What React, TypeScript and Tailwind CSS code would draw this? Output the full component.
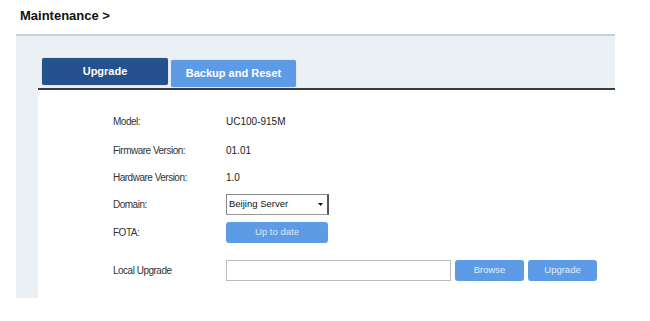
import React from "react";

const font = { fontFamily: '"Liberation Sans", Arial, sans-serif' };

function Row({ label, children, className }: { label: string; children: React.ReactNode; className?: string }) {
  return (
    <div className={"flex h-[21px] items-center " + (className ?? "")}>
      <div className="w-[113px] shrink-0 text-[10px] tracking-[-0.5px] text-[#333]">{label}</div>
      <div className="flex items-center">{children}</div>
    </div>
  );
}

export default function App() {
  return (
    <div className="w-[650px] h-[321px] bg-white overflow-hidden" style={font}>
      <div className="pt-[8px] pl-[20px] text-[13px] leading-[15px] font-bold text-[#111]">Maintenance &gt;</div>
      <div className="mt-[11px] ml-[16px] w-[599px] h-[264px] border-t-2 border-[#cbd0d5] bg-[#ebf0f5] pl-[22px] flex flex-col">
        <div className="flex items-end gap-[3px] pl-[4px] pt-[22px]">
          <div className="w-[126px] h-[27px] mb-[3px] rounded-[2px] bg-[#25518f] text-white text-[11px] font-bold flex items-center justify-center shadow-[0_0_1px_rgba(0,0,0,0.4)]">
            Upgrade
          </div>
          <div className="w-[125px] h-[27px] mb-[1px] rounded-[2px] bg-[#5d9be6] text-white text-[11px] font-bold flex items-center justify-center shadow-[0_0_1px_rgba(0,0,0,0.3)]">
            Backup and Reset
          </div>
        </div>
        <div className="h-[2px] bg-[#3a3d42]" />
        <div className="flex-1 bg-white pl-[75px] pt-[21px] flex flex-col">
          <Row label="Model:">
            <span className="text-[10px] text-[#222]">UC100-915M</span>
          </Row>
          <Row label="Firmware Version:" className="mt-[8px]">
            <span className="text-[10px] text-[#222]">01.01</span>
          </Row>
          <Row label="Hardware Version:" className="mt-[6px]">
            <span className="text-[10px] text-[#222]">1.0</span>
          </Row>
          <Row label="Domain:" className="mt-[6px]">
            <div className="relative w-[103px] h-[21px] border border-[#8a8a8a] border-r-2 border-r-[#555] border-b-[#999] bg-white flex items-center pl-[2px] text-[9.5px] text-[#111]">
              Beijing Server
              <svg className="absolute right-[4px] top-[8px]" width="5" height="3" viewBox="0 0 5 3">
                <path d="M0 0 H5 L2.5 3 Z" fill="#111" />
              </svg>
            </div>
          </Row>
          <Row label="FOTA:" className="mt-[7px]">
            <div className="w-[102px] h-[21px] rounded-[3px] bg-[#5d9be6] text-[#dbe8f8] text-[9.5px] flex items-center justify-center">
              Up to date
            </div>
          </Row>
          <Row label="Local Upgrade" className="mt-[17px]">
            <div className="w-[225px] h-[21px] border border-[#bdbdbd] bg-white" />
            <div className="ml-[4px] w-[69px] h-[21px] rounded-[3px] bg-[#5d9be6] text-[#e3edf9] text-[9.5px] flex items-center justify-center">
              Browse
            </div>
            <div className="ml-[4px] w-[69px] h-[21px] rounded-[3px] bg-[#5d9be6] text-[#e3edf9] text-[9.5px] flex items-center justify-center">
              Upgrade
            </div>
          </Row>
        </div>
      </div>
    </div>
  );
}
